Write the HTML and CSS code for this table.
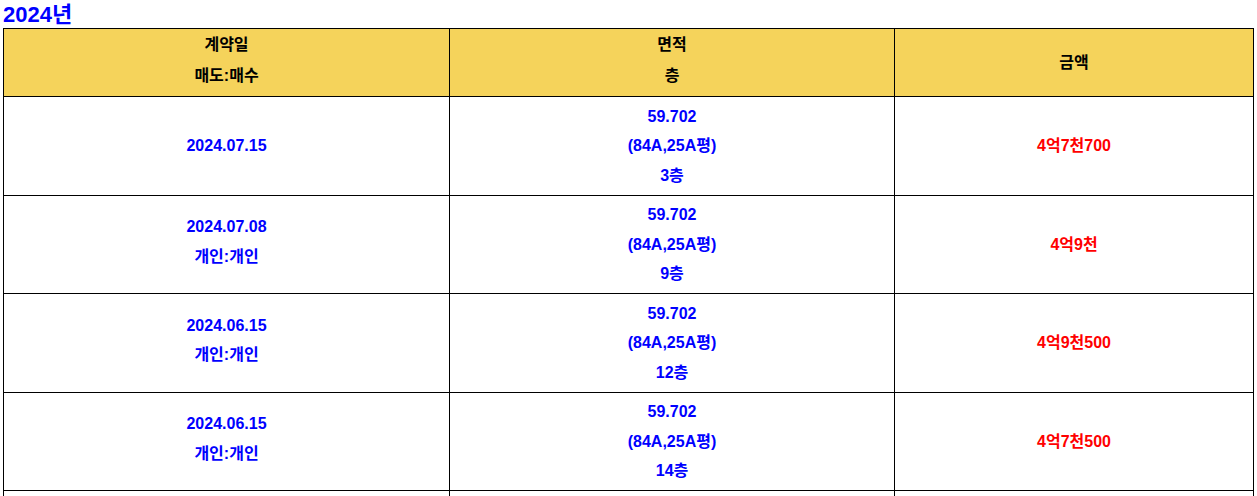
FILE: index.html
```html
<!DOCTYPE html>
<html lang="ko">
<head>
<meta charset="utf-8">
<title>2024년 실거래가</title>
<link rel="stylesheet" href="styles.css">
</head>
<body>
<div class="page">
  <h2 class="year">2024년</h2>
  <table class="deals">
    <colgroup>
      <col class="c-date">
      <col class="c-area">
      <col class="c-price">
    </colgroup>
    <thead>
      <tr>
        <th class="pair">계약일<br>매도:매수</th>
        <th class="pair">면적<br>층</th>
        <th>금액</th>
      </tr>
    </thead>
    <tbody>
      <tr>
        <td class="blue">2024.07.15</td>
        <td class="blue">59.702<br>(84A,25A평)<br>3층</td>
        <td class="red">4억7천700</td>
      </tr>
      <tr>
        <td class="blue pair">2024.07.08<br>개인:개인</td>
        <td class="blue">59.702<br>(84A,25A평)<br>9층</td>
        <td class="red">4억9천</td>
      </tr>
      <tr>
        <td class="blue pair">2024.06.15<br>개인:개인</td>
        <td class="blue">59.702<br>(84A,25A평)<br>12층</td>
        <td class="red">4억9천500</td>
      </tr>
      <tr>
        <td class="blue pair">2024.06.15<br>개인:개인</td>
        <td class="blue">59.702<br>(84A,25A평)<br>14층</td>
        <td class="red">4억7천500</td>
      </tr>
      <tr>
        <td class="blue pair">2024.06.08<br>개인:개인</td>
        <td class="blue">59.702<br>(84A,25A평)<br>7층</td>
        <td class="red">4억8천</td>
      </tr>
    </tbody>
  </table>
</div>
</body>
</html>
```

FILE: styles.css
```css
html, body {
  margin: 0;
  padding: 0;
  background: #ffffff;
}

body {
  font-family: "Liberation Sans", Arial, "Noto Sans CJK KR", sans-serif;
}

.page {
  padding: 0 3px;
}

.year {
  margin: 0;
  height: 28px;
  line-height: 30px;
  font-size: 22px;
  font-weight: bold;
  color: #0000ff;
}

.deals {
  width: 1250px;
  border-collapse: collapse;
  table-layout: fixed;
  font-size: 16px;
  font-weight: bold;
}

.c-date { width: 446px; }
.c-area { width: 445px; }
.c-price { width: 359px; }

.deals th,
.deals td {
  border: 1px solid #000000;
  text-align: center;
  vertical-align: middle;
  padding: 0;
}

.deals th {
  background: #f5d35b;
  color: #000000;
  height: 67px;
  line-height: 31px;
}

.deals td {
  height: 97.5px;
  line-height: 29.5px;
}

.deals .pair {
  padding-bottom: 5px;
}

.deals th.pair {
  height: 62px;
}

.deals td.pair {
  height: 92.5px;
}

.blue { color: #0000ff; }
.red { color: #ff0000; }
```
